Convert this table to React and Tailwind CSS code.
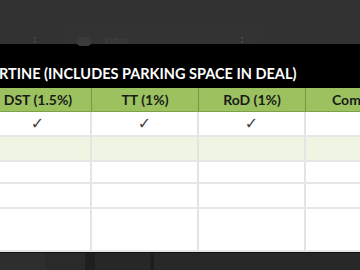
export default function App() {
  const cols = [
    { label: "DST (1.5%)", check: true },
    { label: "TT (1%)", check: true },
    { label: "RoD (1%)", check: true },
    { label: "Commission", check: false, left: true },
  ];
  const rows = [
    { h: "h-[25px]", bg: "bg-white", first: true },
    { h: "h-[25px]", bg: "bg-[#eef5e2]" },
    { h: "h-[22px]", bg: "bg-white" },
    { h: "h-[25px]", bg: "bg-white" },
    { h: "h-[43px]", bg: "bg-white" },
  ];
  return (
    <div className="w-[360px] h-[270px] overflow-hidden bg-[#2a2a2a] flex flex-col" style={{ fontFamily: "Lato, 'Open Sans', sans-serif" }}>
      {/* dark top overlay */}
      <div className="h-[44px] bg-[#323232] relative shrink-0">
        <div className="absolute left-[62px] top-[26px] w-[200px] h-[18px] rounded-t-md bg-[#333333]" />
        <div className="absolute left-[34px] top-[37px] flex flex-col gap-[2px]">
          <div className="w-[2px] h-[2px] bg-[#454545]" />
          <div className="w-[2px] h-[2px] bg-[#454545]" />
        </div>
        <div className="absolute left-[241px] top-[37px] flex flex-col gap-[2px]">
          <div className="w-[2px] h-[2px] bg-[#454545]" />
          <div className="w-[2px] h-[2px] bg-[#454545]" />
        </div>
        <div className="absolute left-[77px] top-[37px] w-[14px] h-[9px] rounded-sm bg-[#3a3a3a]" />
        <div className="absolute left-[104px] top-[34px] text-[9px] text-[#424242]">Video</div>
      </div>
      {/* title band */}
      <div className="h-[44px] bg-black shrink-0 flex items-end pb-[4px]">
        <div className="text-white font-bold text-[14.5px] leading-[20px] whitespace-nowrap -ml-[1px]">
          RTINE (INCLUDES PARKING SPACE IN DEAL)
        </div>
      </div>
      {/* header row */}
      <div className="h-[24px] bg-[#9bc25f] flex -ml-[15px] shrink-0 border-b border-[#7ea24a]">
        {cols.map((c, i) => (
          <div key={i} className={`w-[107px] shrink-0 border-r border-[#76993f] flex items-center ${c.left ? "justify-start pl-[26px]" : "justify-center"} text-[14px] font-bold text-[#1a1a1a] whitespace-nowrap overflow-hidden`}>
            {c.label}
          </div>
        ))}
      </div>
      {/* body rows */}
      {rows.map((r, ri) => (
        <div key={ri} className={`${r.h} ${r.bg} flex -ml-[15px] shrink-0 border-b-2 border-[#e6e6e6]`}>
          {cols.map((c, i) => (
            <div key={i} className="w-[107px] shrink-0 border-r-2 border-[#e4e4e4] flex items-center justify-center text-[16px] text-[#444]" style={{ fontFamily: "'DejaVu Sans', sans-serif" }}>
              {r.first && c.check ? "✓" : ""}
            </div>
          ))}
        </div>
      ))}
      {/* bottom strip */}
      <div className="flex-1 flex border-t border-[#111]">
        <div className="w-[45px] bg-[#2e2e2e]" />
        <div className="w-[40px] bg-[#2a2a2a]" />
        <div className="w-[10px] bg-[#1f1f1f]" />
        <div className="w-[55px] bg-[#272727]" />
        <div className="w-[4px] bg-[#1e1e1e]" />
        <div className="flex-1 bg-[#282828]" />
      </div>
    </div>
  );
}
